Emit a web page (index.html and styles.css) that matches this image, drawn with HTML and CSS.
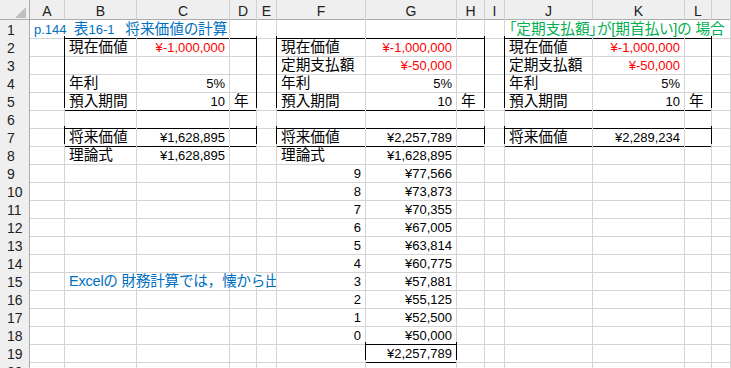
FILE: index.html
```html
<!DOCTYPE html>
<html lang="ja">
<head>
<meta charset="utf-8">
<title>将来価値の計算</title>
<link rel="stylesheet" href="styles.css">
</head>
<body>
<div class="sheet">
  <div class="row head">
    <div class="corner"><span class="tri"></span></div>
    <div class="ch">A</div><div class="ch">B</div><div class="ch">C</div><div class="ch">D</div><div class="ch">E</div><div class="ch">F</div><div class="ch">G</div><div class="ch">H</div><div class="ch">I</div><div class="ch">J</div><div class="ch">K</div><div class="ch">L</div><div class="ch"></div>
  </div>

  <div class="row">
    <div class="rh">1</div>
    <div class="c nr blue pre"><span class="en">p.144  </span>表<span class="en">16-1   </span>将来価値の計算</div><div class="c nr kb"></div><div class="c kb"></div><div class="c kb"></div><div class="c"></div><div class="c kb"></div><div class="c kb"></div><div class="c kb"></div><div class="c"></div><div class="c nr kb green">「定期支払額」が[期首払い]の 場合</div><div class="c nr kb"></div><div class="c nr kb"></div><div class="c"></div>
  </div>

  <div class="row">
    <div class="rh">2</div>
    <div class="c kr"></div><div class="c">現在価値</div><div class="c num red">¥-1,000,000</div><div class="c kr"></div><div class="c kr"></div><div class="c">現在価値</div><div class="c num red">¥-1,000,000</div><div class="c kr"></div><div class="c kr"></div><div class="c">現在価値</div><div class="c num red">¥-1,000,000</div><div class="c kr"></div><div class="c"></div>
  </div>

  <div class="row">
    <div class="rh">3</div>
    <div class="c kr"></div><div class="c"></div><div class="c"></div><div class="c kr"></div><div class="c kr"></div><div class="c">定期支払額</div><div class="c num red">¥-50,000</div><div class="c kr"></div><div class="c kr"></div><div class="c">定期支払額</div><div class="c num red">¥-50,000</div><div class="c kr"></div><div class="c"></div>
  </div>

  <div class="row">
    <div class="rh">4</div>
    <div class="c kr"></div><div class="c">年利</div><div class="c num">5%</div><div class="c kr"></div><div class="c kr"></div><div class="c">年利</div><div class="c num">5%</div><div class="c kr"></div><div class="c kr"></div><div class="c">年利</div><div class="c num">5%</div><div class="c kr"></div><div class="c"></div>
  </div>

  <div class="row">
    <div class="rh">5</div>
    <div class="c kr"></div><div class="c kb">預入期間</div><div class="c num kb">10</div><div class="c kr kb">年</div><div class="c kr"></div><div class="c kb">預入期間</div><div class="c num kb">10</div><div class="c kr kb">年</div><div class="c kr"></div><div class="c kb">預入期間</div><div class="c num kb">10</div><div class="c kr kb">年</div><div class="c"></div>
  </div>

  <div class="row">
    <div class="rh">6</div>
    <div class="c"></div><div class="c kb"></div><div class="c kb"></div><div class="c kb"></div><div class="c"></div><div class="c kb"></div><div class="c kb"></div><div class="c kb"></div><div class="c"></div><div class="c kb"></div><div class="c kb"></div><div class="c kb"></div><div class="c"></div>
  </div>

  <div class="row">
    <div class="rh">7</div>
    <div class="c kr"></div><div class="c kb">将来価値</div><div class="c num kb">¥1,628,895</div><div class="c kr kb"></div><div class="c kr"></div><div class="c kb">将来価値</div><div class="c num kb">¥2,257,789</div><div class="c kr kb"></div><div class="c kr"></div><div class="c kb">将来価値</div><div class="c num kb">¥2,289,234</div><div class="c kr kb"></div><div class="c"></div>
  </div>

  <div class="row">
    <div class="rh">8</div>
    <div class="c"></div><div class="c">理論式</div><div class="c num">¥1,628,895</div><div class="c"></div><div class="c"></div><div class="c">理論式</div><div class="c num">¥1,628,895</div><div class="c"></div><div class="c"></div><div class="c"></div><div class="c"></div><div class="c"></div><div class="c"></div>
  </div>

  <div class="row">
    <div class="rh">9</div>
    <div class="c"></div><div class="c"></div><div class="c"></div><div class="c"></div><div class="c"></div><div class="c num">9</div><div class="c num">¥77,566</div><div class="c"></div><div class="c"></div><div class="c"></div><div class="c"></div><div class="c"></div><div class="c"></div>
  </div>

  <div class="row">
    <div class="rh">10</div>
    <div class="c"></div><div class="c"></div><div class="c"></div><div class="c"></div><div class="c"></div><div class="c num">8</div><div class="c num">¥73,873</div><div class="c"></div><div class="c"></div><div class="c"></div><div class="c"></div><div class="c"></div><div class="c"></div>
  </div>

  <div class="row">
    <div class="rh">11</div>
    <div class="c"></div><div class="c"></div><div class="c"></div><div class="c"></div><div class="c"></div><div class="c num">7</div><div class="c num">¥70,355</div><div class="c"></div><div class="c"></div><div class="c"></div><div class="c"></div><div class="c"></div><div class="c"></div>
  </div>

  <div class="row">
    <div class="rh">12</div>
    <div class="c"></div><div class="c"></div><div class="c"></div><div class="c"></div><div class="c"></div><div class="c num">6</div><div class="c num">¥67,005</div><div class="c"></div><div class="c"></div><div class="c"></div><div class="c"></div><div class="c"></div><div class="c"></div>
  </div>

  <div class="row">
    <div class="rh">13</div>
    <div class="c"></div><div class="c"></div><div class="c"></div><div class="c"></div><div class="c"></div><div class="c num">5</div><div class="c num">¥63,814</div><div class="c"></div><div class="c"></div><div class="c"></div><div class="c"></div><div class="c"></div><div class="c"></div>
  </div>

  <div class="row">
    <div class="rh">14</div>
    <div class="c"></div><div class="c"></div><div class="c"></div><div class="c"></div><div class="c"></div><div class="c num">4</div><div class="c num">¥60,775</div><div class="c"></div><div class="c"></div><div class="c"></div><div class="c"></div><div class="c"></div><div class="c"></div>
  </div>

  <div class="row">
    <div class="rh">15</div>
    <div class="c"></div><div class="c span4 blue full">Excelの 財務計算では，懐から出て</div><div class="c num">3</div><div class="c num">¥57,881</div><div class="c"></div><div class="c"></div><div class="c"></div><div class="c"></div><div class="c"></div><div class="c"></div>
  </div>

  <div class="row">
    <div class="rh">16</div>
    <div class="c"></div><div class="c"></div><div class="c"></div><div class="c"></div><div class="c"></div><div class="c num">2</div><div class="c num">¥55,125</div><div class="c"></div><div class="c"></div><div class="c"></div><div class="c"></div><div class="c"></div><div class="c"></div>
  </div>

  <div class="row">
    <div class="rh">17</div>
    <div class="c"></div><div class="c"></div><div class="c"></div><div class="c"></div><div class="c"></div><div class="c num">1</div><div class="c num">¥52,500</div><div class="c"></div><div class="c"></div><div class="c"></div><div class="c"></div><div class="c"></div><div class="c"></div>
  </div>

  <div class="row">
    <div class="rh">18</div>
    <div class="c"></div><div class="c"></div><div class="c"></div><div class="c"></div><div class="c"></div><div class="c num">0</div><div class="c num kb">¥50,000</div><div class="c"></div><div class="c"></div><div class="c"></div><div class="c"></div><div class="c"></div><div class="c"></div>
  </div>

  <div class="row">
    <div class="rh">19</div>
    <div class="c"></div><div class="c"></div><div class="c"></div><div class="c"></div><div class="c"></div><div class="c kr"></div><div class="c num kr kb">¥2,257,789</div><div class="c"></div><div class="c"></div><div class="c"></div><div class="c"></div><div class="c"></div><div class="c"></div>
  </div>

  <div class="row">
    <div class="rh">20</div>
    <div class="c"></div><div class="c"></div><div class="c"></div><div class="c"></div><div class="c"></div><div class="c"></div><div class="c"></div><div class="c"></div><div class="c"></div><div class="c"></div><div class="c"></div><div class="c"></div><div class="c"></div>
  </div>
</div>
</body>
</html>
```

FILE: styles.css
```css
html, body {
  margin: 0;
  padding: 0;
  background: #ffffff;
}

body {
  width: 731px;
  height: 368px;
  overflow: hidden;
  font-family: "Liberation Sans", "Noto Sans CJK JP", sans-serif;
  font-feature-settings: "palt";
  color: #000000;
}

.sheet {
  display: flex;
  flex-direction: column;
  background: #ffffff;
}

.row {
  display: grid;
  grid-template-columns: 30px 35px 72px 93px 27px 20px 89px 91px 28px 20px 88px 92px 27px 1fr;
  height: 18px;
}

/* headers */
.corner,
.ch,
.rh {
  box-sizing: border-box;
  background: #efefef;
  color: #222222;
  font-size: 14px;
  line-height: 16px;
  padding-top: 3px;
  text-align: center;
  white-space: nowrap;
}

.corner {
  position: relative;
  border-right: 1px solid #ababab;
  border-bottom: 1px solid #ababab;
}

.tri {
  position: absolute;
  right: 3px;
  bottom: 1px;
  width: 0;
  height: 0;
  border-left: 11px solid transparent;
  border-bottom: 11px solid #bfbfbf;
}

.ch {
  border-right: 1px solid #d0d0d0;
  border-bottom: 1px solid #ababab;
}

.rh {
  border-right: 1px solid #ababab;
  border-bottom: 1px solid #d0d0d0;
  padding-top: 4px;
  text-align: left;
  padding-left: 7px;
}

/* cells */
.c {
  box-sizing: border-box;
  border-right: 1px solid #d4d4d4;
  border-bottom: 1px solid #d4d4d4;
  padding: 5px 3px 0 4px;
  font-size: 14.67px;
  line-height: 13px;
  white-space: nowrap;
  overflow: visible;
}

.pre { white-space: pre; }

.en { font-size: 13px; }

.full {
  font-feature-settings: normal;
  letter-spacing: -0.3px;
}

.num {
  text-align: right;
  font-size: 13px;
  padding-right: 4px;
}

.nr { border-right-color: transparent; }
.kr { border-right-color: #000000; }
.kb { border-bottom-color: #000000; }

.span4 {
  grid-column: span 4;
  overflow: hidden;
}

.blue { color: #0070c0; }
.green { color: #00b050; }
.red { color: #ff0000; }
```
